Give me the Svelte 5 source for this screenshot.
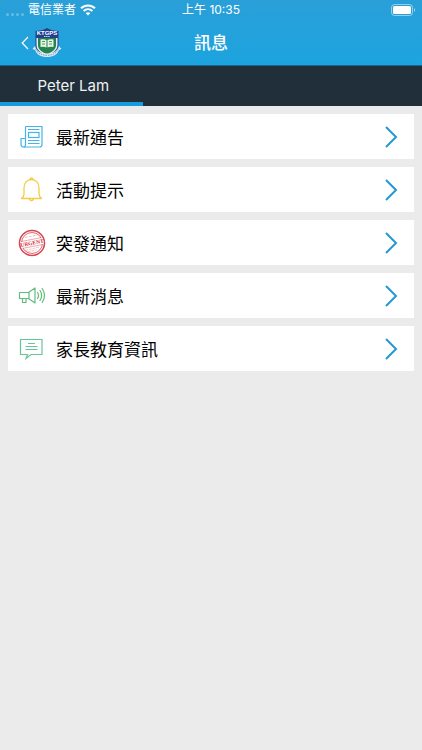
<script lang="ts">
	const students = ['Peter Lam'];
	let active = $state(0);

	const items = [
		{ icon: 'news', label: '最新通告' },
		{ icon: 'bell', label: '活動提示' },
		{ icon: 'urgent', label: '突發通知' },
		{ icon: 'speaker', label: '最新消息' },
		{ icon: 'chat', label: '家長教育資訊' }
	];
</script>

<div class="page">
	<header>
		<div class="status">
			<div class="carrier">
				<span class="dots"><i></i><i></i><i></i><i></i></span>
				<span>電信業者</span>
				<svg width="16" height="12" viewBox="0 0 16 12" fill="none" stroke="#fff" stroke-width="2" aria-hidden="true">
					<path d="M1 4.3C5 .4 11 .4 15 4.3" />
					<path d="M3.6 7C6.2 4.5 9.8 4.5 12.4 7" />
					<path d="M8 11.6 5.6 9.1Q8 7.2 10.4 9.1Z" fill="#fff" stroke="none" />
				</svg>
			</div>
			<div class="time">上午 10:35</div>
			<svg class="battery" width="25" height="12" viewBox="0 0 25 12" aria-hidden="true">
				<rect x=".5" y=".5" width="21" height="11" rx="3" fill="none" stroke="#fff" stroke-opacity=".5" />
				<rect x="2" y="2" width="18" height="8" rx="1.5" fill="#fff" />
				<path d="M23 4v4c1.6-.6 1.6-3.4 0-4Z" fill="#fff" fill-opacity=".5" />
			</svg>
		</div>
		<div class="nav">
			<button class="back" aria-label="返回">
				<svg width="8" height="14" viewBox="0 0 8 14" fill="none" stroke="#fff" stroke-width="1.2">
					<path d="M7 1 1.2 7 7 13" />
				</svg>
				<svg width="30" height="32" viewBox="0 0 30 32">
					<path d="M15 1C12 3 8 4 3.500 4v14c0 5 4 8.500 11.500 11.500C22.500 26.500 26.500 23 26.500 18V4C22 4 18 3 15 1Z" fill="#23408f" />
					<path d="M4.500 11h21v7c0 5-4 8-10.500 10.500C8.500 26 4.500 23 4.500 18Z" fill="#dff0f0" />
					<path d="M6 11h18v7c0 4-3 7-9 9-6-2-9-5-9-9Z" fill="#23824f" />
					<path d="M8.500 12.500q3.500-.7 6 .5v7.500q-2.500-1.200-6-.5Zm7 .5q2.500-1.200 6-.5V20q-3.500-.7-6 .5Z" fill="#e7f3df" />
					<path d="M10 14.500h3M10 17h3M17 14.500h3M17 17h3" stroke="#4c9a6b" />
					<text x="15" y="8" fill="#fff" font-family="Liberation Sans" font-size="6" font-weight="700" text-anchor="middle">KTGPS</text>
					<path d="M12 9.500h6" stroke="#c7d5ec" stroke-dasharray="1.5 .6" />
					<path d="M3 19c1 5 5.500 7.500 12 7.500S26 24 27 19l2.500 3-2.500 1c-1.500 4.500-6 7-12 7s-10.500-2.500-12-7L.5 22Z" fill="#dce8f3" />
					<path d="M3.500 22.500c2.500 4 6.500 5.800 11.500 5.800s9-1.800 11.500-5.800" fill="none" stroke="#7795bd" stroke-dasharray="1.4 1" />
				</svg>
			</button>
			<h1>訊息</h1>
		</div>
	</header>

	<div class="tabs">
		{#each students as name, i}
			<button class="tab" class:active={active === i} onclick={() => (active = i)}>{name}</button>
		{/each}
	</div>

	<main>
		{#each items as item}
			<a class="row" href="#{item.icon}">
				<svg class="icon" width="28" height="28" viewBox="0 0 28 28" fill="none" aria-hidden="true">
					{#if item.icon === 'news'}
						<g stroke="#45b4e6" stroke-width="1.2">
							<path d="M7.500 3.500H24v18q0 2.500-2.500 2.500h-16Q3 24 3 21.500v-6h4.500" />
							<path d="M7.500 3.500v18q0 2.500-2 2.500" />
							<path d="M10 6.500h11.500M10 17.500h11.500M10 20.500h11.500" />
							<rect x="10.500" y="9.500" width="10.500" height="5" />
						</g>
					{:else if item.icon === 'bell'}
						<g stroke="#f7cb45" stroke-width="1.3" stroke-linejoin="round">
							<path d="M6 12c0-5 3-8.500 7.500-8.500S21 7 21 12v6q0 2.500 2.500 4.500h-20Q6 20.500 6 18Z" />
							<path d="M12 3.500q0-1.500 1.500-1.500T15 3.500M11.500 22.500q0 2 2 2t2-2" />
						</g>
					{:else if item.icon === 'urgent'}
						<g stroke="#d8434d">
							<circle cx="14" cy="14" r="12.5" stroke-width="1.5" />
							<circle cx="14" cy="14" r="10.5" stroke-width=".8" />
							<path d="m7 8.500 12-2.500M7 21.500l14-3.500M9.500 23l9-2.300" stroke-width=".7" stroke-opacity=".45" stroke-dasharray="3 .8" />
						</g>
						<g transform="rotate(-11 14 14)">
							<path d="M3 11h22v6H3Z" fill="#fff" />
							<path d="M4 10.500h20M4 17.500h20" stroke="#d8434d" stroke-width=".6" stroke-opacity=".7" />
							<text x="14" y="15.800" fill="#d22e3b" font-family="Liberation Serif" font-size="5.500" font-weight="700" text-anchor="middle">URGENT</text>
						</g>
					{:else if item.icon === 'speaker'}
						<g stroke="#60bd7e" stroke-width="1.2" stroke-linejoin="round">
							<path d="M1.500 10.500h9l6.500-4.500v15l-6.500-4.500h-9ZM11 10.500v6M4.500 16.500v4h3.500v-4" />
							<path d="M19.500 10.500q2 3 0 6M22 8.500q3.300 5 0 10M24.200 6.500q4.600 7 0 14" stroke-linecap="round" />
						</g>
					{:else}
						<g stroke="#68c597" stroke-width="1.2">
							<path d="M2.500 4.500H24v15H13l-5 4 1.500-4h-7Z" />
							<path d="M10 8.500h7M7.500 11.500h12M7.500 14.500h12" />
						</g>
					{/if}
				</svg>
				<span class="label">{item.label}</span>
				<svg class="chevron" width="14" height="22" viewBox="0 0 14 22" fill="none" stroke="#2498d4" stroke-width="2" aria-hidden="true">
					<path d="m2 1 10 10L2 21" />
				</svg>
			</a>
		{/each}
	</main>
</div>

<style>
	:global(body) {
		margin: 0;
		background: #ebebeb;
	}
	.page {
		min-height: 100vh;
		font-family: Inter, 'Noto Sans CJK TC', sans-serif;
	}
	header {
		color: #fff;
		background: linear-gradient(#2a9fd8, #1ca4df);
	}
	.status {
		display: grid;
		grid-template-columns: 1fr auto 1fr;
		align-items: center;
		height: 20px;
		padding: 0 6px;
		font-size: 12px;
		line-height: 20px;
	}
	.carrier {
		display: flex;
		align-items: center;
		gap: 4px;
	}
	.dots {
		display: flex;
		gap: 2px;
		padding-top: 8px;
	}
	.dots i {
		width: 3px;
		height: 3px;
		border-radius: 50%;
		background: rgba(255, 255, 255, 0.3);
	}
	.battery {
		justify-self: end;
	}
	.nav {
		display: grid;
		grid-template-columns: 1fr auto 1fr;
		align-items: center;
		height: 45px;
		border-bottom: 1px solid #17658c;
	}
	.back {
		display: flex;
		align-items: center;
		justify-self: start;
		gap: 3px;
		padding: 0 0 0 21px;
		border: 0;
		background: none;
		cursor: pointer;
	}
	h1 {
		margin: 0;
		font-size: 17px;
		font-weight: 500;
		line-height: 24px;
	}
	.tabs {
		display: flex;
		height: 40px;
		background: #202f39;
	}
	.tab {
		min-width: 34%;
		padding: 4px 0 0 3px;
		border: 0;
		border-bottom: 4px solid transparent;
		background: none;
		color: #eef2f4;
		font: 400 15px/20px Inter, sans-serif;
		cursor: pointer;
	}
	.tab.active {
		border-bottom-color: #169bdc;
	}
	main {
		display: flex;
		flex-direction: column;
		gap: 8px;
		padding: 8px;
	}
	.row {
		display: flex;
		align-items: center;
		height: 45px;
		padding: 0 16px 0 10px;
		background: #fff;
		color: #000;
		text-decoration: none;
	}
	.label {
		flex: 1;
		padding: 2px 0 0 10px;
		font-size: 17px;
		line-height: 24px;
	}
</style>
